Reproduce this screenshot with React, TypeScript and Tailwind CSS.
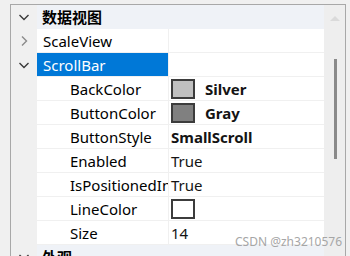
import React from 'react'

type Row = {
  name: string
  value?: string
  swatch?: string
  bold?: boolean
  child?: boolean
  expander?: 'open' | 'closed'
  selected?: boolean
}

const FONT = { fontFamily: '"Noto Sans", "Noto Sans CJK SC", sans-serif' }

function Chevron({ dir, className }: { dir: 'open' | 'closed'; className?: string }) {
  return (
    <svg width="12" height="12" viewBox="0 0 12 12" className={className}>
      {dir === 'open' ? (
        <path d="M1.5 4 L6 8.5 L10.5 4" fill="none" stroke="currentColor" strokeWidth="1.4" />
      ) : (
        <path d="M4 1.5 L8.5 6 L4 10.5" fill="none" stroke="currentColor" strokeWidth="1.4" />
      )}
    </svg>
  )
}

function Category({ title }: { title: string }) {
  return (
    <div className="flex h-[24px] items-center bg-[#eff2f7]">
      <div className="flex w-[26px] justify-center bg-[#f0f0f0] h-full items-center">
        <Chevron dir="open" className="text-[#3a3a3a]" />
      </div>
      <span className="pl-[5px] pt-px text-[15px] font-bold text-black">{title}</span>
    </div>
  )
}

function PropRow({ row }: { row: Row }) {
  return (
    <div className="flex h-[24px]">
      <div className="flex w-[26px] items-center justify-center bg-[#f0f0f0]">
        {row.expander && (
          <Chevron
            dir={row.expander}
            className={row.expander === 'open' ? 'text-[#3a3a3a]' : 'text-[#8a8a8a]'}
          />
        )}
      </div>
      <div
        className={
          'flex w-[131px] items-center overflow-hidden whitespace-nowrap border-b border-[#f0f0f0] pt-px text-[15px] ' +
          (row.selected ? 'bg-[#0078d7] text-white' : 'bg-white text-black') +
          (row.child ? ' pl-[33px]' : ' pl-[6px]')
        }
      >
        {row.name}
      </div>
      <div className="w-px bg-[#f0f0f0]" />
      <div className="flex flex-1 items-center overflow-hidden whitespace-nowrap border-b border-[#f0f0f0] bg-white pl-[2px] text-[15px] text-[#141414]">
        {row.swatch && (
          <div
            className="mr-[10px] h-[20px] w-[24px] border-2 border-[#3c3c3c]"
            style={{ background: row.swatch }}
          />
        )}
        <span className={'pt-px ' + (row.bold ? 'font-bold' : '')}>{row.value}</span>
      </div>
    </div>
  )
}

const rows: Row[] = [
  { name: 'ScaleView', expander: 'closed' },
  { name: 'ScrollBar', expander: 'open', selected: true },
  { name: 'BackColor', child: true, swatch: '#c0c0c0', value: 'Silver', bold: true },
  { name: 'ButtonColor', child: true, swatch: '#808080', value: 'Gray', bold: true },
  { name: 'ButtonStyle', child: true, value: 'SmallScroll', bold: true },
  { name: 'Enabled', child: true, value: 'True' },
  { name: 'IsPositionedInside', child: true, value: 'True' },
  { name: 'LineColor', child: true, swatch: '#ffffff' },
  { name: 'Size', child: true, value: '14' },
]

export default function App() {
  return (
    <div className="relative h-[256px] w-[350px] overflow-hidden bg-[#f0f0f0]" style={FONT}>
      <div className="ml-[10px] mt-[4px] flex h-[260px] w-[336px] border-l border-r border-t border-[#a8a8a8]">
        <div className="flex-1">
          <Category title="数据视图" />
          {rows.map((r) => (
            <PropRow key={r.name} row={r} />
          ))}
          <Category title="外观" />
        </div>
        <div className="relative w-[21px] bg-[#eeeeee]">
          <svg width="12" height="8" viewBox="0 0 12 8" className="absolute left-[5px] top-[9px]">
            <path d="M1 7 L6 2 L11 7 Z" fill="#dadada" />
          </svg>
          <div className="absolute left-[10px] top-[54px] h-[100px] w-[3px] bg-[#8a8a8a]" />
        </div>
      </div>
      <div className="absolute left-[235px] top-[234px] text-[12px] leading-[16px] text-[#a6a6a6]">
        CSDN @zh3210576
      </div>
    </div>
  )
}
